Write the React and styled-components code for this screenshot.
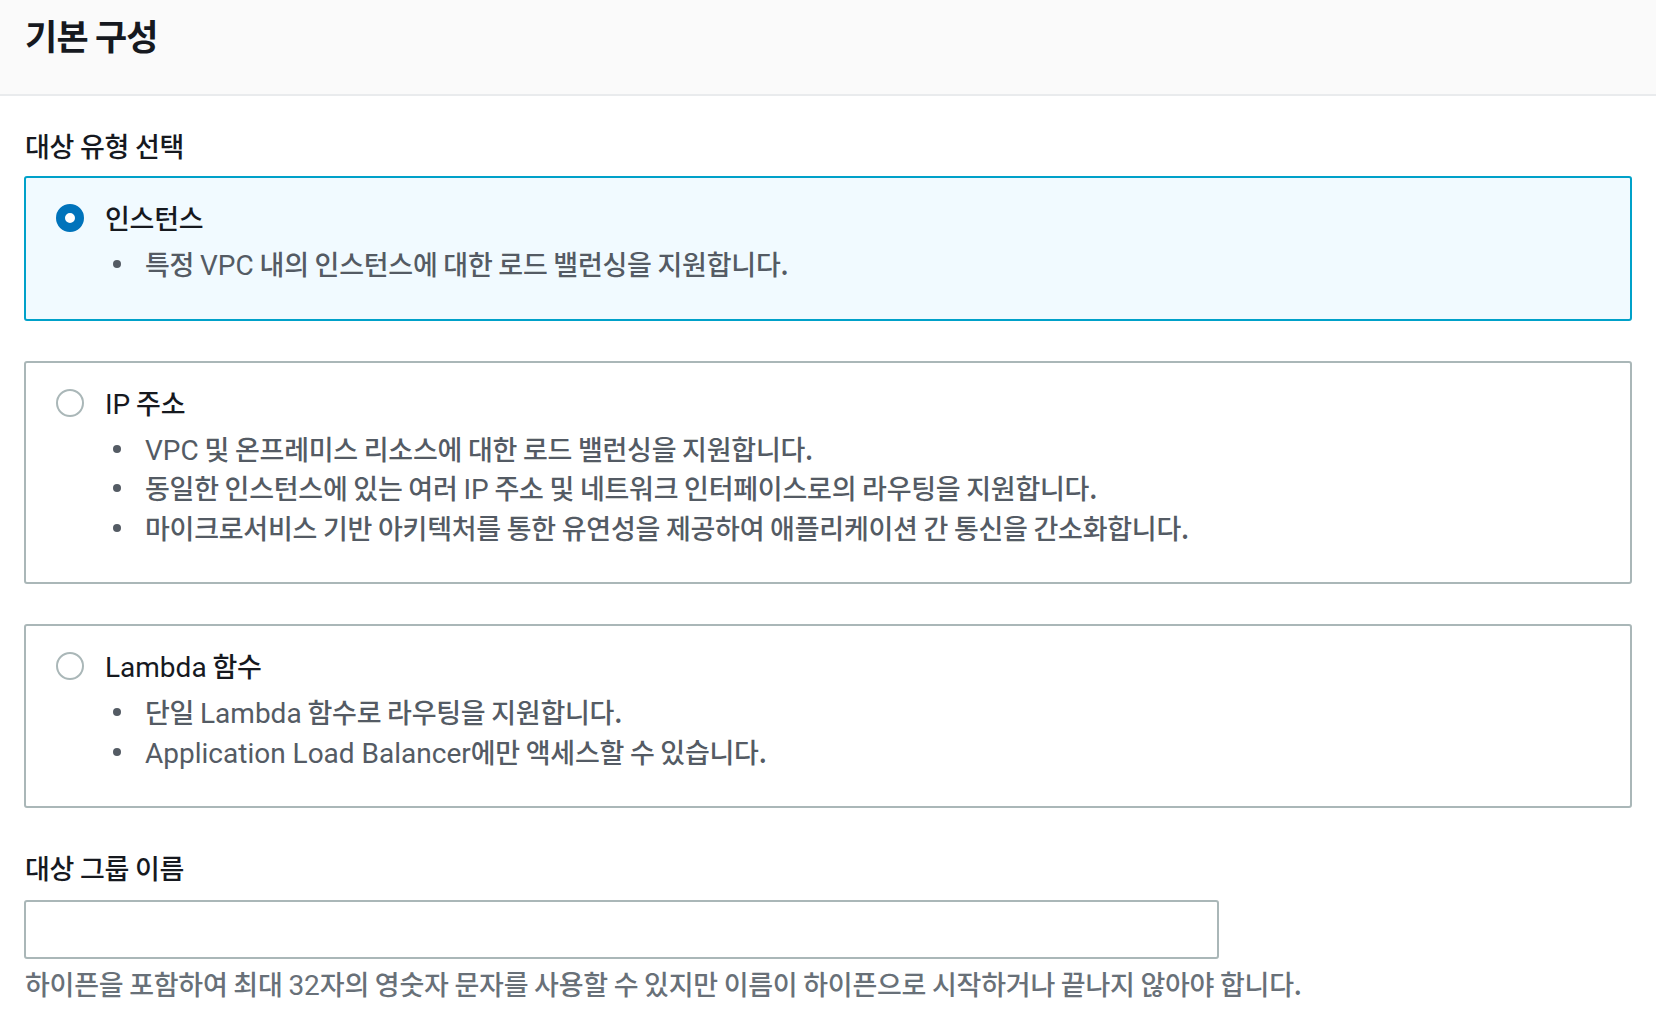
import React from "react";
import styled, { createGlobalStyle } from "styled-components";

const GlobalStyle = createGlobalStyle`
  html, body {
    margin: 0;
    padding: 0;
    background: #ffffff;
  }
  body {
    font-family: "Noto Sans CJK KR", "Open Sans", sans-serif;
    color: #16191f;
  }
  * { box-sizing: border-box; }
`;

const Page = styled.div`
  width: 1656px;
  min-height: 1012px;
  background: #ffffff;
`;

const Header = styled.header`
  display: flex;
  align-items: flex-start;
  height: 96px;
  padding: 14px 25px 0;
  background: #fafafa;
  border-bottom: 2px solid #e9ebed;
`;

const Title = styled.h2`
  margin: 0;
  font-family: "Noto Sans CJK KR", sans-serif;
  font-size: 35px;
  line-height: 42px;
  font-weight: 700;
  letter-spacing: -0.8px;
  color: #16191f;
`;

const Body = styled.main`
  display: flex;
  flex-direction: column;
  padding: 32px 24px 0;
`;

const FieldLabel = styled.div`
  font-size: 27px;
  line-height: 36px;
  font-weight: 500;
  letter-spacing: -0.25px;
  color: #16191f;
  padding-left: 1px;
  margin-top: ${(p) => p.$top || 0}px;
`;

const TileGroup = styled.div`
  display: flex;
  flex-direction: column;
  gap: 40px;
  margin-top: 12px;
`;

const Tile = styled.div`
  display: flex;
  flex-direction: column;
  padding: 20px 30px 35px;
  border: 2px solid ${(p) => (p.$selected ? "#00a1c9" : "#aab7b8")};
  border-radius: 3px;
  background: ${(p) => (p.$selected ? "#f1faff" : "#ffffff")};
`;

const TileHead = styled.div`
  display: flex;
  align-items: center;
  gap: 21px;
  height: 40px;
`;

const Radio = styled.span`
  flex: none;
  width: 28px;
  height: 28px;
  border-radius: 50%;
  background: #ffffff;
  border: ${(p) => (p.$checked ? "9.5px solid #0073bb" : "2px solid #aab7b8")};
`;

const TileTitle = styled.span`
  font-size: 27px;
  line-height: 40px;
  font-weight: 500;
  letter-spacing: -0.25px;
  color: #16191f;
`;

const Bullets = styled.ul`
  list-style: none;
  margin: 6px 0 0;
  padding: 0 0 0 89px;
  display: flex;
  flex-direction: column;
`;

const Bullet = styled.li`
  position: relative;
  font-size: 27px;
  line-height: 39.5px;
  height: 39.5px;
  font-weight: 500;
  letter-spacing: -0.25px;
  color: #545b64;
  white-space: nowrap;

  &::before {
    content: "";
    position: absolute;
    left: -32px;
    top: 16px;
    width: 8px;
    height: 8px;
    border-radius: 50%;
    background: #545b64;
  }
`;

const Latin = styled.span`
  font-family: Roboto, "Open Sans", "Noto Sans CJK KR", sans-serif;
  font-size: 28px;
  font-weight: 400;
  letter-spacing: 0;
  line-height: 1;
`;

const TextInput = styled.input`
  display: block;
  width: 1195px;
  height: 59px;
  margin-top: 14px;
  padding: 0 16px;
  border: 2px solid #aab7b8;
  border-radius: 3px;
  background: #ffffff;
  font-family: Roboto, "Noto Sans CJK KR", sans-serif;
  font-size: 27px;
  outline: none;
`;

const Hint = styled.div`
  margin-top: 7px;
  font-size: 27px;
  line-height: 36px;
  font-weight: 500;
  letter-spacing: -0.25px;
  color: #687078;
  padding-left: 1px;
  white-space: nowrap;
`;

const Txt = ({ children }) =>
  children
    .split(/([A-Za-z0-9]+(?:[ .][A-Za-z0-9]+)*)/)
    .map((part, i) =>
      /[A-Za-z0-9]/.test(part) ? <Latin key={i}>{part}</Latin> : part
    );

const options = [
  {
    id: "instance",
    title: "인스턴스",
    checked: true,
    items: ["특정 VPC 내의 인스턴스에 대한 로드 밸런싱을 지원합니다."],
  },
  {
    id: "ip",
    title: "IP 주소",
    checked: false,
    items: [
      "VPC 및 온프레미스 리소스에 대한 로드 밸런싱을 지원합니다.",
      "동일한 인스턴스에 있는 여러 IP 주소 및 네트워크 인터페이스로의 라우팅을 지원합니다.",
      "마이크로서비스 기반 아키텍처를 통한 유연성을 제공하여 애플리케이션 간 통신을 간소화합니다.",
    ],
  },
  {
    id: "lambda",
    title: "Lambda 함수",
    checked: false,
    items: [
      "단일 Lambda 함수로 라우팅을 지원합니다.",
      "Application Load Balancer에만 액세스할 수 있습니다.",
    ],
  },
];

export default function App() {
  return (
    <Page>
      <GlobalStyle />
      <Header>
        <Title>기본 구성</Title>
      </Header>
      <Body>
        <FieldLabel>대상 유형 선택</FieldLabel>
        <TileGroup>
          {options.map((o) => (
            <Tile key={o.id} $selected={o.checked}>
              <TileHead>
                <Radio $checked={o.checked} />
                <TileTitle>
                  <Txt>{o.title}</Txt>
                </TileTitle>
              </TileHead>
              <Bullets>
                {o.items.map((t) => (
                  <Bullet key={t}>
                    <Txt>{t}</Txt>
                  </Bullet>
                ))}
              </Bullets>
            </Tile>
          ))}
        </TileGroup>
        <FieldLabel $top={42}>대상 그룹 이름</FieldLabel>
        <TextInput type="text" aria-label="대상 그룹 이름" />
        <Hint>
          <Txt>
            하이픈을 포함하여 최대 32자의 영숫자 문자를 사용할 수 있지만 이름이 하이픈으로 시작하거나 끝나지 않아야 합니다.
          </Txt>
        </Hint>
      </Body>
    </Page>
  );
}
